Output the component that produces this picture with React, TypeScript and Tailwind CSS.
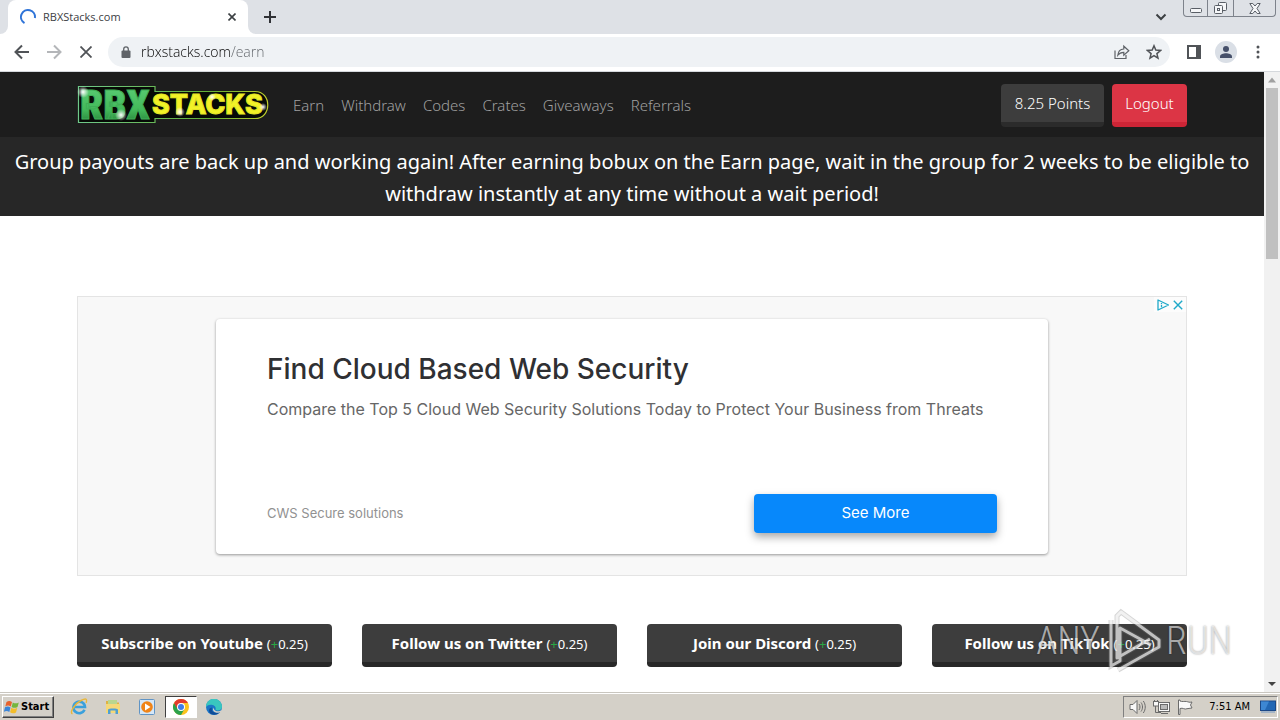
import React from "react";

type Offer = { label: string; reward: string };

const navLinks = ["Earn", "Withdraw", "Codes", "Crates", "Giveaways", "Referrals"];

const offers: Offer[] = [
  { label: "Subscribe on Youtube", reward: "0.25" },
  { label: "Follow us on Twitter", reward: "0.25" },
  { label: "Join our Discord", reward: "0.25" },
  { label: "Follow us on TikTok", reward: "0.25" },
];

function TabStrip() {
  return (
    <div className="flex h-[34px] shrink-0 bg-[#dee1e6]">
      <div className="flex w-2 items-end bg-white">
        <div className="h-full w-full rounded-br-lg bg-[#dee1e6]" />
      </div>
      <div className="flex w-60 items-center rounded-t-lg bg-white pr-2 pl-3">
        <svg className="h-4 w-4 shrink-0" viewBox="0 0 16 16" fill="none" stroke="#2f74d8" strokeWidth="2">
          <path d="M4.500 14.100A7 7 0 1 1 14.900 9" />
        </svg>
        <span className="ml-[7px] flex-1 font-['Open_Sans',sans-serif] text-[11px] text-[#3c4043]">RBXStacks.com</span>
        <button type="button" aria-label="Close tab" className="flex h-4 w-4 items-center justify-center">
          <svg className="h-2 w-2" viewBox="0 0 8 8" stroke="#3c4043" strokeWidth="1.6">
            <path d="M.5.5l7 7M7.500.5l-7 7" />
          </svg>
        </button>
      </div>
      <div className="w-2 bg-white">
        <div className="h-full w-full rounded-bl-lg bg-[#dee1e6]" />
      </div>
      <button type="button" aria-label="New tab" className="flex h-[34px] w-7 items-center justify-center">
        <svg className="h-3 w-3" viewBox="0 0 12 12" stroke="#303236" strokeWidth="2">
          <path d="M6 0v12M0 6h12" />
        </svg>
      </button>
      <div className="flex-1" />
      <button type="button" aria-label="Search tabs" className="mr-[10px] flex w-6 items-center justify-center">
        <svg className="h-2 w-3" viewBox="0 0 12 8" fill="none" stroke="#3c4043" strokeWidth="2">
          <path d="M1.500 1.500L6 6l4.500-4.500" />
        </svg>
      </button>
      <div className="mr-1 flex h-[17px] w-[93px] rounded-b-[4px] border border-t-0 border-[#7d828b] text-[#595e66]">
        <button type="button" aria-label="Minimize" className="flex w-6 items-end justify-center border-r border-[#7d828b] pb-[3px]">
          <svg className="h-[5px] w-3" viewBox="0 0 12 5" fill="#f5f6f8" stroke="currentColor">
            <rect x=".5" y=".5" width="11" height="4" rx="1" />
          </svg>
        </button>
        <button type="button" aria-label="Restore" className="flex w-[26px] items-center justify-center border-r border-[#7d828b]">
          <svg className="h-3 w-[13px]" viewBox="0 0 13 12" fill="#f5f6f8" stroke="currentColor">
            <rect x="4.500" y=".5" width="8" height="8" rx="1" />
            <rect x=".5" y="3.500" width="8" height="8" rx="1" />
            <rect x="3.500" y="6.500" width="2" height="2" />
          </svg>
        </button>
        <button type="button" aria-label="Close" className="flex flex-1 items-center justify-center">
          <svg className="h-[11px] w-3" viewBox="0 0 12 11" fill="#f5f6f8" stroke="currentColor">
            <path d="M.8.5h3L6 3 8.200.5h3L8 5.500l3.200 5h-3L6 8l-2.200 2.500h-3L4 5.500z" />
          </svg>
        </button>
      </div>
    </div>
  );
}

function Toolbar() {
  return (
    <div className="flex h-[38px] shrink-0 items-center border-b border-[#d5d8dc] bg-white pr-[14px] pb-px pl-3">
      <button type="button" aria-label="Back" className="flex w-5 justify-center">
        <svg className="h-4 w-4" viewBox="0 0 16 16" fill="none" stroke="#505357" strokeWidth="2">
          <path d="M15 8H2M8 1.500L1.500 8 8 14.500" />
        </svg>
      </button>
      <button type="button" aria-label="Forward" className="ml-3 flex w-5 justify-center">
        <svg className="h-4 w-4" viewBox="0 0 16 16" fill="none" stroke="#b4b6b9" strokeWidth="2">
          <path d="M1 8h13M8 1.500L14.500 8 8 14.500" />
        </svg>
      </button>
      <button type="button" aria-label="Stop loading" className="ml-3 flex w-5 justify-center">
        <svg className="h-3 w-3" viewBox="0 0 12 12" stroke="#505357" strokeWidth="1.800">
          <path d="M.5.5l11 11M11.500.5l-11 11" />
        </svg>
      </button>
      <div className="ml-3 flex h-[30px] flex-1 items-center rounded-full bg-[#eff2f5] pr-2 pl-[13px]">
        <svg className="h-3 w-[10px]" viewBox="0 0 10 12">
          <rect x="0.500" y="4.500" width="9" height="7.500" rx="1" fill="#5f6368" />
          <path d="M2.700 5V3.200a2.300 2.300 0 0 1 4.600 0V5" fill="none" stroke="#5f6368" strokeWidth="1.300" />
        </svg>
        <input
          aria-label="Address"
          defaultValue="rbxstacks.com/earn"
          className="ml-2 min-w-0 flex-1 bg-[linear-gradient(to_right,#000000_92px,#5f6368_92px)] bg-clip-text pl-[2px] font-['Open_Sans',sans-serif] text-sm font-light text-transparent outline-none"
        />
        <button type="button" aria-label="Share" className="flex w-4 justify-center">
          <svg className="h-4 w-4" viewBox="0 0 16 16" fill="none" stroke="#5f6368" strokeWidth="1.200">
            <path d="M1 6.500v8h11V11" />
            <path d="M3.800 11.200c.4-4.200 2.700-6 6-6.200V2.200l5 4.600-5 4.300V8.300c-2.700 0-4.500.8-6 2.900z" />
          </svg>
        </button>
        <button type="button" aria-label="Bookmark" className="ml-4 flex w-4 justify-center">
          <svg className="h-4 w-4" viewBox="0 0 16 16" fill="none" stroke="#505357" strokeWidth="1.500">
            <path d="M8 1.800l1.800 4.300 4.700.4-3.600 3.100 1.100 4.600L8 11.700l-4 2.500 1.100-4.600-3.600-3.100 4.700-.4z" />
          </svg>
        </button>
      </div>
      <button type="button" aria-label="Side panel" className="ml-4 flex w-4 justify-center">
        <svg className="h-[14px] w-[14px]" viewBox="0 0 14 14">
          <rect x="1" y="1" width="12" height="12" fill="none" stroke="#505357" strokeWidth="2" />
          <rect x="9" y="1" width="4" height="12" fill="#505357" />
        </svg>
      </button>
      <button type="button" aria-label="Profile" className="ml-[13px] flex w-[22px] justify-center">
        <svg className="h-[22px] w-[22px]" viewBox="0 0 22 22">
          <circle cx="11" cy="11" r="11" fill="#dadfe6" />
          <circle cx="11" cy="8" r="3" fill="#46506a" />
          <path d="M5 17v-1.500c0-2 3.500-3.200 6-3.200s6 1.200 6 3.200V17z" fill="#46506a" />
        </svg>
      </button>
      <button type="button" aria-label="Menu" className="ml-[13px] flex w-4 justify-center">
        <svg className="h-[14px] w-1" viewBox="0 0 4 14" fill="#505357">
          <circle cx="2" cy="2" r="1.500" />
          <circle cx="2" cy="7" r="1.500" />
          <circle cx="2" cy="12" r="1.500" />
        </svg>
      </button>
    </div>
  );
}

function Logo() {
  return (
    <svg className="h-10 w-48 overflow-visible" viewBox="0 0 192 40" role="img" aria-label="RBXStacks">
      <defs>
        <linearGradient id="green" x1="0" y1="0" x2="0" y2="1">
          <stop offset="0" stopColor="#5fd07a" />
          <stop offset=".6" stopColor="#43b95a" />
          <stop offset="1" stopColor="#1c6b2d" />
        </linearGradient>
        <linearGradient id="edge" x1="0" y1="0" x2="1" y2="0">
          <stop offset="0" stopColor="#6fc98a" />
          <stop offset=".7" stopColor="#64ae35" />
          <stop offset="1" stopColor="#c2cf2c" />
        </linearGradient>
        <radialGradient id="glow">
          <stop offset="0" stopColor="#fff" />
          <stop offset=".4" stopColor="#fff" stopOpacity=".6" />
          <stop offset="1" stopColor="#fff" stopOpacity="0" />
        </radialGradient>
      </defs>
      <path
        d="M1.500 1.500H78v5h100c17 0 17 27 0 27H78v4H1.500z"
        fill="#060a06"
        stroke="url(#edge)"
        strokeWidth="1.200"
      />
      <text x="3" y="34" fontFamily="'Roboto Condensed', Roboto, sans-serif" fontWeight="900" fontSize="41" fill="url(#green)" stroke="#3fae57">
        RBX
      </text>
      <text x="75" y="29" fontFamily="Inter, sans-serif" fontWeight="800" fontSize="27" fill="#f2f227" stroke="#e5e526">
        STACKS
      </text>
      <circle cx="6" cy="7" r="6" fill="url(#glow)" />
      <circle cx="44" cy="30" r="6" fill="url(#glow)" />
      <circle cx="103" cy="27" r="5" fill="url(#glow)" />
      <circle cx="135" cy="12" r="4" fill="url(#glow)" />
      <circle cx="186" cy="22" r="4" fill="url(#glow)" />
    </svg>
  );
}

function SiteHeader() {
  return (
    <header className="bg-[#1d1d1d]">
      <div className="mx-auto flex h-[65px] w-full max-w-[1110px] items-center">
        <a href="#home" className="mr-4">
          <Logo />
        </a>
        <nav className="flex flex-1 gap-px pt-[2px]">
          {navLinks.map((name) => (
            <a key={name} href={"#" + name.toLowerCase()} className="px-2 text-[15px] font-light text-[#a0a0a0]">
              {name}
            </a>
          ))}
        </nav>
        <div className="flex gap-2 pt-[2px] text-[15px] font-light text-white">
          <button type="button" className="h-[43px] w-[103px] rounded-[4px] border-b-[5px] border-[#2b2b2b] bg-[#3d3d3d]">
            8.25 Points
          </button>
          <button type="button" className="h-[43px] w-[75px] rounded-[4px] border-b-[5px] border-[#cd2536] bg-[#dc3545]">
            Logout
          </button>
        </div>
      </div>
    </header>
  );
}

function AdPanel() {
  return (
    <section aria-label="Advertisement" className="relative mt-20 border border-[#e4e4e4] bg-[#f8f8f8] px-[138px] pt-[22px] pb-[21px]">
      <div className="absolute top-0 right-0 flex h-[15px] items-center gap-1 bg-white/60 px-[3px]">
        <a href="#adchoices" aria-label="AdChoices">
          <svg className="h-3 w-3" viewBox="0 0 12 12" fill="none" stroke="#1fa9c9" strokeWidth="1.300">
            <path d="M1 1v10L11.500 6z" strokeLinejoin="round" />
            <path d="M4.500 4v.9M4.500 5.800v2.500" />
          </svg>
        </a>
        <button type="button" aria-label="Close ad" className="flex">
          <svg className="h-[10px] w-[10px]" viewBox="0 0 10 10" stroke="#1fa9c9" strokeWidth="1.400">
            <path d="M.8.8l8.400 8.400M9.200.8L.8 9.200" />
          </svg>
        </button>
      </div>
      <div className="flex h-[235px] flex-col rounded-[4px] bg-white px-[51px] pt-[33px] pb-[21px] font-['Inter',sans-serif] shadow-[0_1px_3px_rgba(0,0,0,0.4)]">
        <h2 className="text-[28px] leading-[34px] font-medium text-[#2f3033]">Find Cloud Based Web Security</h2>
        <p className="mt-3 text-base leading-[22px] text-[#666]">
          Compare the Top 5 Cloud Web Security Solutions Today to Protect Your Business from Threats
        </p>
        <div className="mt-auto flex items-center justify-between">
          <span className="text-[13px] text-[#919191]">CWS Secure solutions</span>
          <button type="button" className="h-[39px] w-[243px] rounded-[4px] bg-[#0788fb] text-[15px] text-white shadow-[0_4px_8px_rgba(0,0,0,0.35)]">
            See More
          </button>
        </div>
      </div>
    </section>
  );
}

function Watermark() {
  return (
    <div className="pointer-events-none absolute right-8 bottom-[18px] flex items-center gap-1 font-['Roboto_Condensed','Liberation_Sans_Narrow',sans-serif] text-[38px] leading-none font-light text-white/60 [text-shadow:0_0_2px_rgba(0,0,0,0.4)]">
      <span>ANY</span>
      <svg className="h-[66px] w-[58px]" viewBox="0 0 58 66" fill="none">
        <g stroke="#777" strokeOpacity=".3" strokeWidth="5">
          <path d="M7 12v46l9-5V20l31 17M14 62l41-23v-7L17 4l-4 4v42l33-19" />
        </g>
        <g stroke="#fff" strokeOpacity=".65" strokeWidth="3" strokeLinejoin="round">
          <path d="M7 12v46l9-5V20l31 17M14 62l41-23v-7L17 4l-4 4v42l33-19" />
        </g>
      </svg>
      <span>RUN</span>
    </div>
  );
}

function Scrollbar() {
  return (
    <div aria-hidden="true" className="flex w-4 shrink-0 flex-col items-center bg-[#f1f1f1]">
      <svg className="h-4 w-4" viewBox="0 0 16 16" fill="#a0a0a0">
        <path d="M4 10.500l4-5 4 5z" />
      </svg>
      <div className="h-[171px] w-3 bg-[#c0c0c0]" />
      <svg className="mt-auto h-4 w-4" viewBox="0 0 16 16" fill="#444">
        <path d="M4 6h8l-4 4z" />
      </svg>
    </div>
  );
}

function Taskbar() {
  return (
    <footer className="flex h-7 shrink-0 items-center border-t border-[#c9c6bf] bg-[#d4d0c8] pt-px pr-[2px] pl-[2px] shadow-[inset_0_1px_0_#fff]">
      <button
        type="button"
        className="flex h-[22px] w-[52px] items-center gap-px border border-t-white border-r-[#404040] border-b-[#404040] border-l-white pl-px font-['DejaVu_Sans_Condensed','DejaVu_Sans',sans-serif] text-[11px] font-bold text-black shadow-[inset_-1px_-1px_0_#808080]"
      >
        <svg className="h-4 w-4 shrink-0" viewBox="0 0 16 14">
          <path d="M2.500 2C4.500.7 6 .8 8 2L6.800 6.500C5 5.300 3.200 5.300 1.300 6.400z" fill="#e8622c" />
          <path d="M8.800 2.400c2 1.200 3.800 1.200 6 0l-1.300 4.500c-2 1.200-4 1.200-5.900 0z" fill="#74b63c" />
          <path d="M1 7.300c2-1.100 3.700-1 5.500.1l-1.200 4.500c-1.800-1.200-3.700-1.200-5.500 0z" fill="#3b85d8" />
          <path d="M7.300 7.800c2 1.200 3.900 1.200 6 0L12 12.400c-2.200 1.200-4 1.100-5.900-.1z" fill="#f3bd2a" />
        </svg>
        Start
      </button>
      <button type="button" aria-label="Internet Explorer" className="ml-2 flex h-[22px] w-[34px] items-center justify-center">
        <svg className="h-[18px] w-[18px]" viewBox="0 0 18 18" fill="none">
          <path d="M14.500 11.800A5.800 5.800 0 1 1 15 9H5" stroke="#3aa0dc" strokeWidth="2.600" />
          <path d="M2.500 15.800C-1 14.500 5 5.500 11 2.500s6-1 5.200 2.300" stroke="#e8b73a" strokeWidth="1.400" />
        </svg>
      </button>
      <button type="button" aria-label="File Explorer" className="flex h-[22px] w-[34px] items-center justify-center">
        <svg className="h-4 w-4" viewBox="0 0 16 16">
          <path d="M1 2h5l1 1.500h7V14H1z" fill="#dfb243" />
          <rect x="3" y="1" width="9" height="5" fill="#b9d68e" />
          <path d="M1 5h14v9H1z" fill="#f5d878" />
          <path d="M3 15V10.500c0-1.500 10-1.500 10 0V15h-2.500v-3.500h-5V15z" fill="#4f9fd2" />
        </svg>
      </button>
      <button type="button" aria-label="Media Player" className="flex h-[22px] w-[34px] items-center justify-center">
        <svg className="h-4 w-4" viewBox="0 0 16 16">
          <rect x=".5" y=".5" width="15" height="15" rx="1" fill="#d5e7f8" stroke="#6094c5" />
          <circle cx="8" cy="8" r="5.800" fill="#f08418" />
          <path d="M6 4.500v7L11.500 8z" fill="#fff" />
        </svg>
      </button>
      <button
        type="button"
        aria-label="Chrome"
        className="ml-px flex h-[22px] w-8 items-center justify-center border border-t-[#404040] border-r-white border-b-white border-l-[#404040] bg-white"
      >
        <svg className="h-4 w-4" viewBox="0 0 16 16">
          <circle cx="8" cy="8" r="8" fill="#fcc31e" />
          <path d="M8 8H4L1.070 4A8 8 0 0 0 8 16l3.500-6z" fill="#2ba24c" />
          <path d="M1.070 4A8 8 0 0 1 14.930 4H8L4.500 10z" fill="#e33b2e" />
          <circle cx="8" cy="8" r="4" fill="#fff" />
          <circle cx="8" cy="8" r="3" fill="#3f7de8" />
        </svg>
      </button>
      <button type="button" aria-label="Edge" className="flex h-[22px] w-[34px] items-center justify-center">
        <svg className="h-4 w-4" viewBox="0 0 16 16">
          <circle cx="8" cy="8" r="8" fill="#1b75c6" />
          <path d="M0 8a8 8 0 0 1 16-.5c0 3-2.500 4-4.500 4-2.500 0-2-1.500-1.800-2C10 6 3 4 0 8z" fill="#39c6bf" />
          <path d="M6 8.500c-1.500 4 3 7 8 4.300-2 3-6 3.800-9 2.200-3-2-2.500-6 1-6.500z" fill="#0f4c98" />
          <path d="M8 8.500c-.8 2 1.500 4.300 5 3.800l2.400-1V13l-3 .8C8 14 5.500 11 8 8.500z" fill="#d4d0c8" />
        </svg>
      </button>
      <div className="ml-auto flex h-[22px] items-center border border-t-[#808080] border-r-white border-b-white border-l-[#808080] pr-px pl-[5px] text-[#6b6b6b]">
        <svg className="h-4 w-[18px]" viewBox="0 0 18 16" fill="#f8f8f8" stroke="currentColor">
          <path d="M1 5.500h3l4-4v13l-4-4H1z" />
          <path d="M10 5c1.300 1.800 1.300 4.200 0 6M12 3.500c2 2.600 2 6.400 0 9M14.300 2c2.600 3.500 2.600 8.500 0 12" fill="none" />
        </svg>
        <svg className="ml-[6px] h-4 w-[18px]" viewBox="0 0 18 16" fill="#f8f8f8" stroke="currentColor">
          <rect x="5.500" y="3.500" width="11" height="9" />
          <rect x="7.500" y="5.500" width="7" height="5" fill="#bbb" />
          <path d="M8 14.500h7M2.500 7v6.500H8M1.500 1v2M4.500 1v2" fill="none" />
          <rect x=".5" y="2.500" width="5" height="4.500" />
        </svg>
        <svg className="ml-[6px] h-4 w-4" viewBox="0 0 16 16" fill="#f8f8f8" stroke="currentColor">
          <path d="M1.500 1v14.500h1.500V9.500c3-1.200 4.500 1.500 7 .2l5-.7-1.500-3 1.500-3c-3 .7-3.500-.2-5.500-.5S5 3 3 2V1z" />
        </svg>
        <time className="ml-4 font-['DejaVu_Sans_Condensed','DejaVu_Sans',sans-serif] text-[11px] text-black">7:51 AM</time>
        <svg className="ml-[10px] h-[14px] w-4" viewBox="0 0 16 14">
          <rect x=".5" y="1" width="15" height="9.500" fill="#2267b4" stroke="#1b4887" />
          <path d="M1 1.500h8L5 10H1z" fill="#3d87d3" />
          <rect x="1" y="11" width="14" height="2" fill="#a4b4c6" />
        </svg>
      </div>
    </footer>
  );
}

export default function App() {
  return (
    <div className="flex h-screen flex-col overflow-hidden bg-white font-['Noto_Sans',sans-serif]">
      <TabStrip />
      <Toolbar />
      <div className="flex min-h-0 flex-1">
        <div className="relative min-w-0 flex-1 overflow-hidden">
          <SiteHeader />
          <p className="bg-[#272727] px-2 pt-[9px] pb-[6px] text-center text-xl leading-8 text-white">
            Group payouts are back up and working again! After earning bobux on the Earn page, wait in the group for 2
            weeks to be eligible to withdraw instantly at any time without a wait period!
          </p>
          <main className="mx-auto w-full max-w-[1110px]">
            <AdPanel />
            <div className="mt-12 grid grid-cols-4 gap-[30px]">
              {offers.map((offer) => (
                <button
                  key={offer.label}
                  type="button"
                  className="h-[43px] rounded-[4px] border-b-[5px] border-[#282828] bg-[#3d3d3d] text-[15px] font-bold text-white"
                >
                  {offer.label}{" "}
                  <small className="text-[13px] font-normal">
                    (<span className="text-[#28a745]">+</span>
                    {offer.reward})
                  </small>
                </button>
              ))}
            </div>
          </main>
          <Watermark />
        </div>
        <Scrollbar />
      </div>
      <Taskbar />
    </div>
  );
}
